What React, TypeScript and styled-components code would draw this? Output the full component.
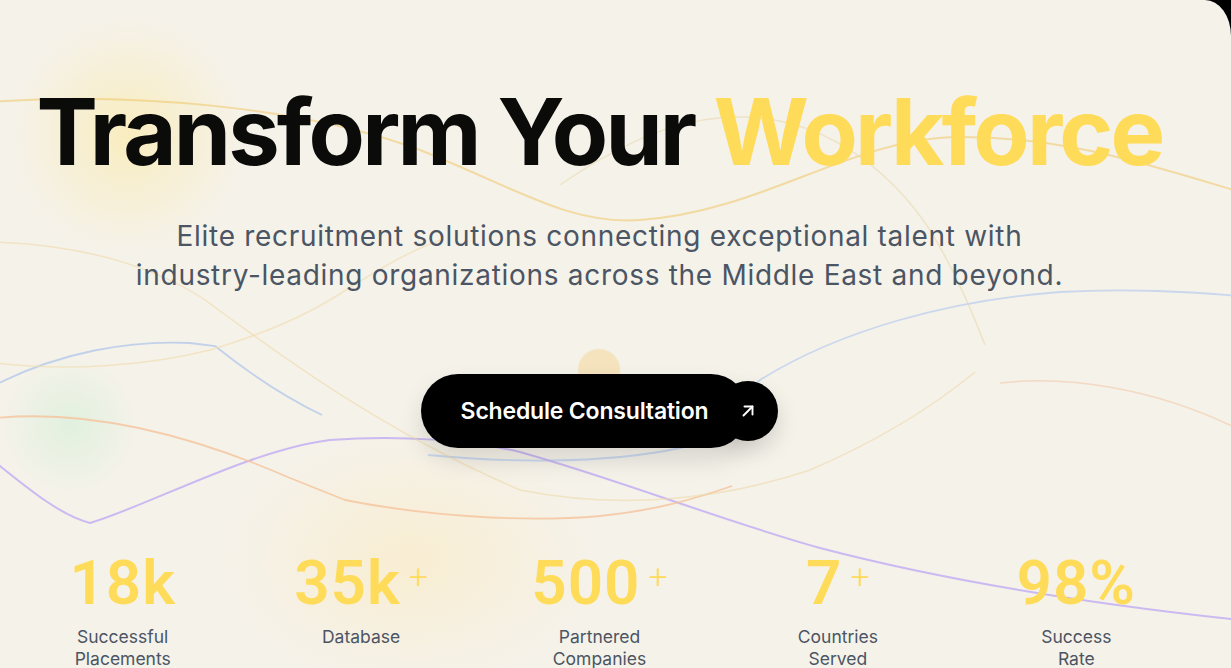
import React from "react";
import styled, { createGlobalStyle } from "styled-components";

const GlobalStyle = createGlobalStyle`
  html, body {
    margin: 0;
    padding: 0;
    background: #000;
    overflow: hidden;
  }
  * { box-sizing: border-box; }
`;

const Page = styled.div`
  width: 1231px;
  height: 668px;
  background: #000;
`;

const Hero = styled.section`
  position: relative;
  width: 1231px;
  height: 668px;
  overflow: hidden;
  border-top-right-radius: 26px 36px;
  background-color: #f5f2ea;
  background-image:
    radial-gradient(circle at 599px 370px, #f4e3bd 0 20px, rgba(244, 227, 189, 0) 22px),
    radial-gradient(circle at 128px 135px, rgba(255, 228, 120, 0.38) 0, rgba(255, 228, 120, 0.18) 60px, rgba(255, 228, 120, 0) 120px),
    radial-gradient(circle at 70px 425px, rgba(200, 238, 208, 0.45) 0, rgba(200, 238, 208, 0) 70px),
    radial-gradient(ellipse 190px 130px at 410px 560px, rgba(252, 234, 190, 0.55) 0, rgba(252, 234, 190, 0) 100%);
  font-family: Inter, "Liberation Sans", sans-serif;
`;

const Lines = styled.svg`
  position: absolute;
  inset: 0;
  width: 1231px;
  height: 668px;
  pointer-events: none;
`;

const Content = styled.div`
  position: relative;
  z-index: 1;
  display: flex;
  flex-direction: column;
  align-items: center;
  padding: 86px 32px 0 0;
`;

const Title = styled.h1`
  margin: 0;
  font-size: 92px;
  line-height: 1;
  font-weight: 700;
  letter-spacing: -0.031em;
  color: #0b0b0a;
  white-space: nowrap;
`;

const Accent = styled.span`
  color: #ffdb5a;
`;

const Subtitle = styled.p`
  margin: 39px 0 0;
  font-size: 28px;
  line-height: 39px;
  font-weight: 400;
  letter-spacing: 0.7px;
  color: #4b5563;
  text-align: center;
  white-space: nowrap;
`;

const CtaRow = styled.div`
  display: flex;
  align-items: center;
  margin-top: 79px;
`;

const CtaPill = styled.button`
  height: 74px;
  padding: 0 40px;
  border: none;
  border-radius: 37px;
  background: #000;
  color: #fff;
  font-family: Inter, "Liberation Sans", sans-serif;
  font-size: 23px;
  font-weight: 600;
  letter-spacing: -0.008em;
  box-shadow: 0 12px 24px rgba(0, 0, 0, 0.12);
  cursor: pointer;
`;

const CtaIcon = styled.span`
  width: 60px;
  height: 60px;
  margin-left: -30px;
  border-radius: 50%;
  background: #000;
  display: flex;
  align-items: center;
  justify-content: center;
  box-shadow: 0 10px 22px rgba(0, 0, 0, 0.14);
`;

const Stats = styled.div`
  display: grid;
  grid-template-columns: repeat(5, 1fr);
  width: 1192px;
  margin-top: 104px;
`;

const Stat = styled.div`
  display: flex;
  flex-direction: column;
  align-items: center;
`;

const NumberRow = styled.div`
  display: flex;
  align-items: flex-start;
  color: #ffdb5a;
`;

const Value = styled.span`
  font-family: Roboto, "Liberation Sans", sans-serif;
  font-size: 62px;
  line-height: 1;
  font-weight: 600;
  letter-spacing: 1px;
`;

const Plus = styled.span`
  font-family: Roboto, "Liberation Sans", sans-serif;
  font-size: 34px;
  line-height: 1;
  font-weight: 300;
  margin-left: 8px;
  margin-top: 7px;
`;

const Label = styled.div`
  margin-top: 12px;
  font-family: Inter, "Liberation Sans", sans-serif;
  font-size: 17.5px;
  line-height: 22px;
  color: #4b5563;
  text-align: center;
`;

const stats = [
  { value: "18k", plus: false, lines: ["Successful", "Placements"] },
  { value: "35k", plus: true, lines: ["Database"] },
  { value: "500", plus: true, lines: ["Partnered", "Companies"] },
  { value: "7", plus: true, lines: ["Countries", "Served"] },
  { value: "98%", plus: false, lines: ["Success", "Rate"] },
];

const ArrowUpRight = () => (
  <svg width="16" height="16" viewBox="0 0 16 16" fill="none" stroke="#fff" strokeWidth="1.9" strokeLinecap="round" strokeLinejoin="round">
    <path d="M3.5 12.5 L12.5 3.5" />
    <path d="M4.5 3.5 H12.5 V11.5" />
  </svg>
);

export default function App() {
  return (
    <Page>
      <GlobalStyle />
      <Hero>
        <Lines viewBox="0 0 1231 668" fill="none">
          <path d="M-10,102 C120,92 300,105 420,150 C520,190 570,225 640,220 C760,212 850,140 953,137 C1060,135 1150,165 1240,192" stroke="#efc766" strokeOpacity="0.55" strokeWidth="2" />
          <path d="M560,185 C640,130 700,112 760,118 C830,125 890,170 930,230 C960,280 975,320 985,345" stroke="#e8d8ae" strokeOpacity="0.6" strokeWidth="1.5" />
          <path d="M-5,385 C60,352 130,340 190,343 L215,346 C245,370 280,395 322,415" stroke="#b8cbea" strokeOpacity="0.85" strokeWidth="1.8" />
          <path d="M428,455 C500,462 600,465 680,448 C720,440 735,400 760,380 C840,330 950,300 1060,292 C1130,288 1190,292 1240,296" stroke="#bfd0ee" strokeOpacity="0.8" strokeWidth="1.8" />
          <path d="M-5,462 C30,490 60,515 90,523 C150,505 250,450 330,440 C400,435 470,440 520,452 C620,480 720,520 820,548 C950,582 1100,605 1240,620" stroke="#c6b2f2" strokeOpacity="0.9" strokeWidth="2" />
          <path d="M-5,418 C80,410 180,430 290,478 L345,500 C420,515 520,523 600,516 C660,510 700,497 732,486" stroke="#f5c39b" strokeOpacity="0.8" strokeWidth="1.8" />
          <path d="M-5,242 C90,245 160,270 205,300 C280,355 380,430 520,490 C620,510 720,500 810,470 C880,440 935,405 975,372" stroke="#efd9a8" strokeOpacity="0.6" strokeWidth="1.5" />
          <path d="M-5,363 C70,372 150,365 210,350 C260,335 300,318 330,300 C370,275 400,255 440,240" stroke="#f1deb3" strokeOpacity="0.7" strokeWidth="1.5" />
          <path d="M1000,383 C1060,376 1150,385 1240,430" stroke="#f2ceb0" strokeOpacity="0.7" strokeWidth="1.5" />
        </Lines>
        <Content>
          <Title>
            Transform Your <Accent>Workforce</Accent>
          </Title>
          <Subtitle>
            Elite recruitment solutions connecting exceptional talent with
            <br />
            industry-leading organizations across the Middle East and beyond.
          </Subtitle>
          <CtaRow>
            <CtaPill>Schedule Consultation</CtaPill>
            <CtaIcon>
              <ArrowUpRight />
            </CtaIcon>
          </CtaRow>
          <Stats>
            {stats.map((s) => (
              <Stat key={s.value}>
                <NumberRow>
                  <Value>{s.value}</Value>
                  {s.plus && <Plus>+</Plus>}
                </NumberRow>
                <Label>
                  {s.lines.map((l, i) => (
                    <div key={i}>{l}</div>
                  ))}
                </Label>
              </Stat>
            ))}
          </Stats>
        </Content>
      </Hero>
    </Page>
  );
}
